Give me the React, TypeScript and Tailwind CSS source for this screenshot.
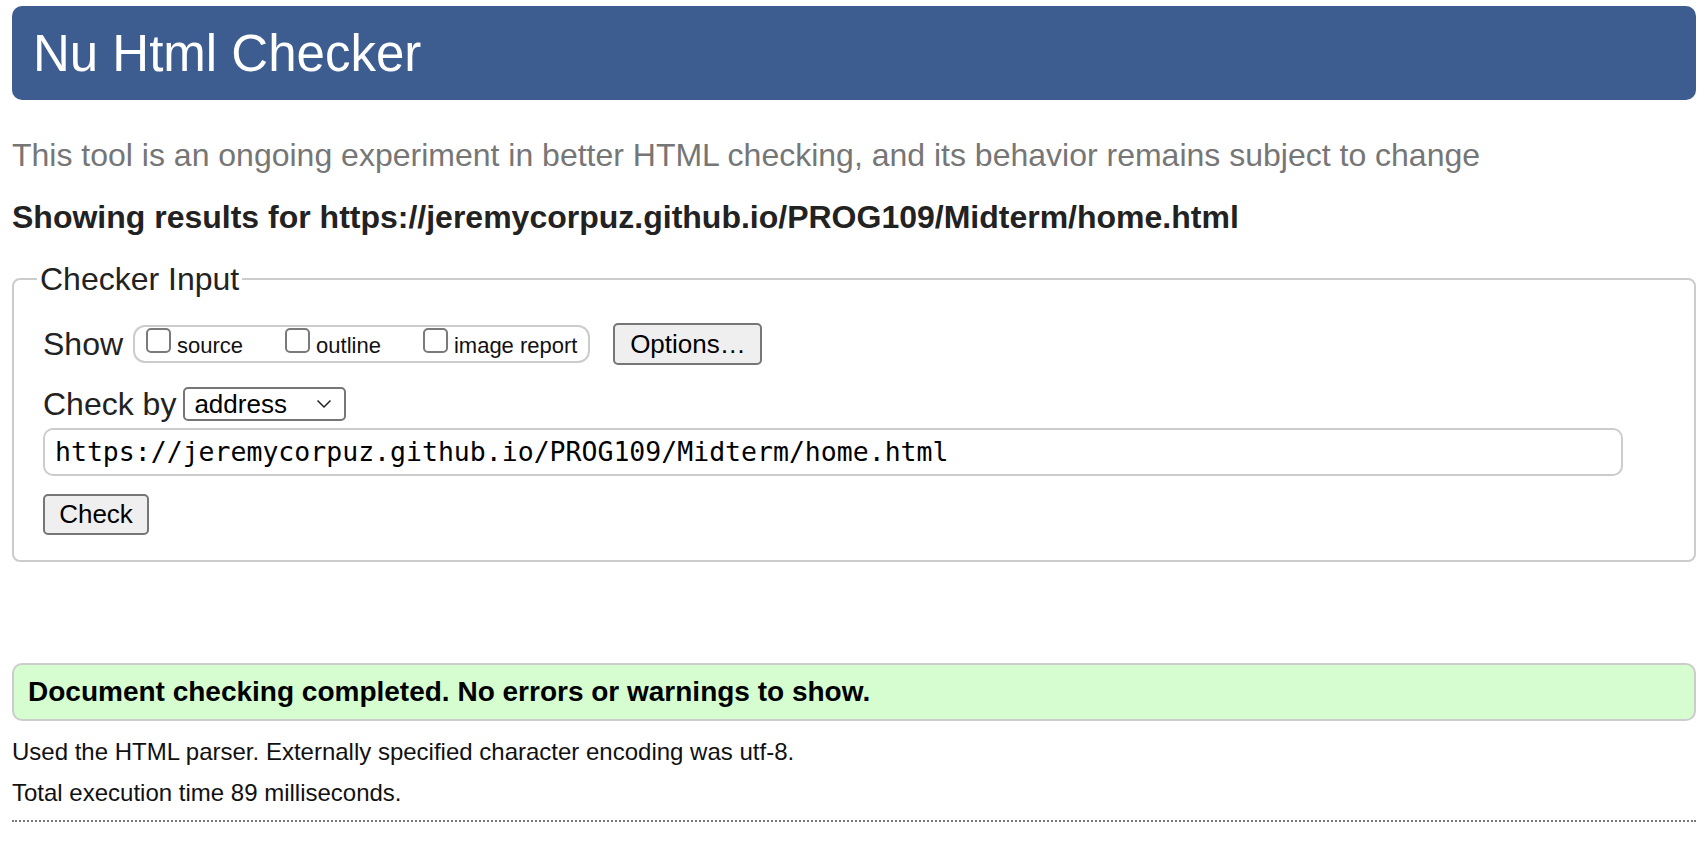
import React from "react";

const sans = "font-['Liberation_Sans',Arial,Helvetica,sans-serif]";

const Checkbox = ({ label }: { label: string }) => (
  <label className="flex items-end gap-[6px]">
    <span className="mb-[6px] block h-[25px] w-[25px] rounded-[5px] border-2 border-[#7a7a7a] bg-white" />
    <span className="text-[22px] leading-[26px] text-[#111]">{label}</span>
  </label>
);

const Button = ({ label, className }: { label: string; className: string }) => (
  <button
    type="button"
    className={`flex items-center justify-center rounded-[5px] border-2 border-[#767676] bg-[#efefef] text-[26px] text-black ${className}`}
  >
    {label}
  </button>
);

const App = () => {
  const url = "https://jeremycorpuz.github.io/PROG109/Midterm/home.html";

  return (
    <div className={`${sans} min-h-screen bg-white px-3 pt-[6px] text-[#222]`}>
      <h1 className="flex h-[94px] items-center rounded-[10px] bg-[#3d5d91] pl-[21px] text-[51px] leading-none text-white">
        Nu Html Checker
      </h1>

      <p className="mt-[37px] text-[32px] leading-[36px] text-[#767676]">
        This tool is an ongoing experiment in better HTML checking, and its behavior remains subject to change
      </p>

      <p className="mt-[26px] text-[32px] font-bold leading-[36px] text-[#222]">
        Showing results for {url}
      </p>

      <fieldset className="mt-[26px] rounded-[8px] border-2 border-[#cccccc] pb-[25px]">
        <legend className="ml-[23px] px-[3px] text-[32px] leading-[36px]">Checker Input</legend>

        <div className="pl-[29px]">
          <div className="mt-[26px] flex h-[42px] items-center">
            <span className="text-[32px] leading-[36px]">Show</span>
            <div className="ml-[10px] flex h-[38px] items-end gap-[42px] rounded-[12px] border-2 border-[#cccccc] pb-[2px] pl-[11px] pr-[11px]">
              <Checkbox label="source" />
              <Checkbox label="outline" />
              <Checkbox label="image report" />
            </div>
            <Button label="Options…" className="ml-[23px] h-[42px] w-[149px]" />
          </div>

          <div className="mt-[20px] flex h-[37px] items-center">
            <span className="text-[32px] leading-[36px]">Check by</span>
            <div className="ml-[7px] flex h-[34px] w-[163px] items-center justify-between rounded-[5px] border-2 border-[#767676] bg-white pl-[9px] pr-[12px]">
              <span className="text-[26px] leading-none text-black">address</span>
              <svg width="16" height="10" viewBox="0 0 16 10" fill="none" stroke="#222" strokeWidth="1.5">
                <path d="M1.5 1.5 L8 8 L14.5 1.5" />
              </svg>
            </div>
          </div>

          <div className="mt-[6px] flex h-[48px] w-[1580px] items-center rounded-[10px] border-2 border-[#cccccc] bg-white pl-[10px]">
            <span className="font-['DejaVu_Sans_Mono',Menlo,monospace] text-[26.5px] leading-none text-black">
              {url}
            </span>
          </div>

          <Button label="Check" className="mt-[18px] h-[41px] w-[106px]" />
        </div>
      </fieldset>

      <div className="mt-[101px] flex h-[58px] items-center rounded-[10px] border-2 border-[#cccccc] bg-[#d5fdd0] pl-[14px]">
        <span className="text-[28px] font-bold leading-none text-black">
          Document checking completed. No errors or warnings to show.
        </span>
      </div>

      <p className="mt-[17px] text-[24px] leading-[28px] text-[#111]">
        Used the HTML parser. Externally specified character encoding was utf-8.
      </p>
      <p className="mt-[13px] text-[24px] leading-[28px] text-[#111]">Total execution time 89 milliseconds.</p>

      <div className="mt-[13px] border-t-2 border-dotted border-[#777]" />
    </div>
  );
};

export default App;
